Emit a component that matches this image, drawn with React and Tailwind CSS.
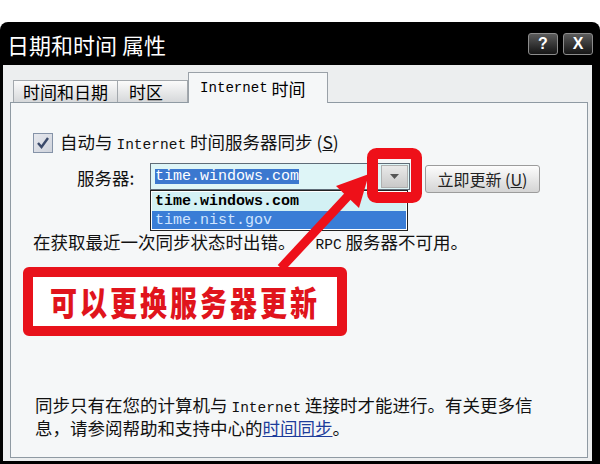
import React from "react";

const Latin = ({ children, className = "" }) => (
  <span className={"font-['Liberation_Mono',monospace] text-[0.83em] " + className}>{children}</span>
);

const TitleButton = ({ children }) => (
  <div className="w-[30px] h-[22px] rounded-[3px] border border-[#8c8c8c] bg-linear-to-b from-[#5c5c5c] to-[#161616] flex items-center justify-center text-white font-bold text-[16px] leading-none font-['Liberation_Sans',sans-serif]">
    {children}
  </div>
);

const Checkbox = () => (
  <div className="w-[20px] h-[20px] border border-[#8593a8] bg-linear-to-br from-[#e6e8ee] to-[#cfd3dc] flex items-center justify-center">
    <svg width="14" height="14" viewBox="0 0 14 14">
      <path d="M2 7 L5.5 11 L12 2" fill="none" stroke="#3b4a6b" strokeWidth="2.4" />
    </svg>
  </div>
);

export default function App() {
  return (
    <div className="relative w-[600px] h-[464px] bg-white pt-[22px] font-['Noto_Sans_CJK_SC',sans-serif] overflow-hidden">
      <div className="h-[442px] bg-black rounded-t-[8px] flex flex-col">
        {/* title bar */}
        <div className="h-[43px] flex items-center justify-between pl-[7px] pr-[7px]">
          <span className="text-white text-[22px] leading-none">日期和时间 属性</span>
          <div className="flex gap-[5px]">
            <TitleButton>?</TitleButton>
            <TitleButton>X</TitleButton>
          </div>
        </div>

        {/* body */}
        <div className="flex-1 ml-[3px] mr-[8px] mb-[3px] bg-[#eceeef] pt-[7px] pl-[7px] pr-[4px] pb-[3px] flex flex-col">
          <div className="h-[30px] flex items-end pl-[3px] text-[17px] leading-none text-black">
            <div className="w-[105px] h-[22px] border border-b-0 border-[#a3a8ad] bg-linear-to-b from-[#fbfbfb] to-[#d6d8da] flex items-center justify-center">
              时间和日期
            </div>
            <div className="w-[70px] h-[22px] border border-b-0 border-l-0 border-[#a3a8ad] bg-linear-to-b from-[#fbfbfb] to-[#d6d8da] flex items-center pl-[11px]">
              时区
            </div>
            <div className="relative z-10 -mb-px w-[140px] h-[31px] border border-b-0 border-[#9aa1a8] bg-[#f5f7f8] flex items-center pl-[11px]">
              <Latin>Internet</Latin>&nbsp;时间
            </div>
          </div>

          {/* tab page */}
          <div className="h-[356px] border border-[#8f9aa3] bg-[#f5f7f8] flex flex-col text-[17.5px] leading-[20px] text-[#111]">
            <div className="mt-[30px] ml-[22px] flex items-center h-[20px]">
              <Checkbox />
              <span className="ml-[7px]">
                自动与 <Latin>Internet</Latin> 时间服务器同步 (<span className="underline">S</span>)
              </span>
            </div>

            <div className="mt-[10px] h-[30px] flex items-start">
              <span className="ml-[66px] mt-[5px] w-[73px]">服务器:</span>
              <div className="relative w-[260px] h-[27px] border border-[#5f6c78] bg-[#def5f7] flex items-center">
                <span className="ml-[4px] h-[15px] bg-[#3b78cf] text-white font-['Liberation_Mono',monospace] text-[15px] leading-[15px]">
                  time.windows.com
                </span>
                <div className="ml-auto mr-[1px] w-[27px] h-[23px] bg-linear-to-b from-[#e9e9e9] to-[#c9c9c9] border border-[#b0b0b0] flex items-center justify-center">
                  <svg width="9" height="5" viewBox="0 0 9 5">
                    <path d="M0 0 H9 L4.5 5 Z" fill="#555" />
                  </svg>
                </div>

                {/* open dropdown list */}
                <div className="absolute left-[-1px] top-[26px] w-[258px] border border-[#222] bg-white p-[1px] z-20 font-['Liberation_Mono',monospace] text-[15px] leading-[19px]">
                  <div className="h-[19px] bg-[#d3f1f4] pl-[3px] font-bold text-black">time.windows.com</div>
                  <div className="h-[18px] bg-[#3a7dd6] pl-[3px] text-[#cfe4ff]">time.nist.gov</div>
                </div>
              </div>
              <button className="ml-[15px] mt-[2px] w-[115px] h-[28px] rounded-[3px] border border-[#9c9c9c] bg-linear-to-b from-[#fdfdfd] to-[#d4d4d4] text-[16px] leading-none text-[#222]">
                立即更新 (<span className="underline">U</span>)
              </button>
            </div>

            <div className="mt-[39px] ml-[22px]">
              在获取最近一次同步状态时出错。<Latin className="ml-[20px]">RPC</Latin> 服务器不可用。
            </div>

            <div className="mt-[12px] ml-[12px] w-[324px] h-[69px] rounded-[6px] border-[10px] border-[#e8121b] bg-white flex items-center justify-center">
              <span className="text-[#e0141c] text-[27px] font-black leading-none tracking-[3px] scale-y-125">
                可以更换服务器更新
              </span>
            </div>

            <div className="mt-[59px] ml-[24px] mr-[20px] text-[17.5px] leading-[20px]">
              <div>
                同步只有在您的计算机与 <Latin>Internet</Latin> 连接时才能进行。有关更多信
              </div>
              <div>
                息，请参阅帮助和支持中心的
                <span className="text-[#1d3c9b] underline">时间同步</span>。
              </div>
            </div>
          </div>
        </div>
      </div>

      {/* red annotation: box round the drop button and the pointing arrow */}
      <svg className="absolute inset-0 z-30 pointer-events-none" width="600" height="464" viewBox="0 0 600 464">
        <rect x="372.5" y="153.5" width="44" height="44" rx="4" fill="none" stroke="#ee1019" strokeWidth="11" />
        <line x1="281" y1="268" x2="348" y2="196" stroke="#ee1019" strokeWidth="9" />
        <polygon points="369,174 359,208 336,186" fill="#ee1019" />
      </svg>
    </div>
  );
}
